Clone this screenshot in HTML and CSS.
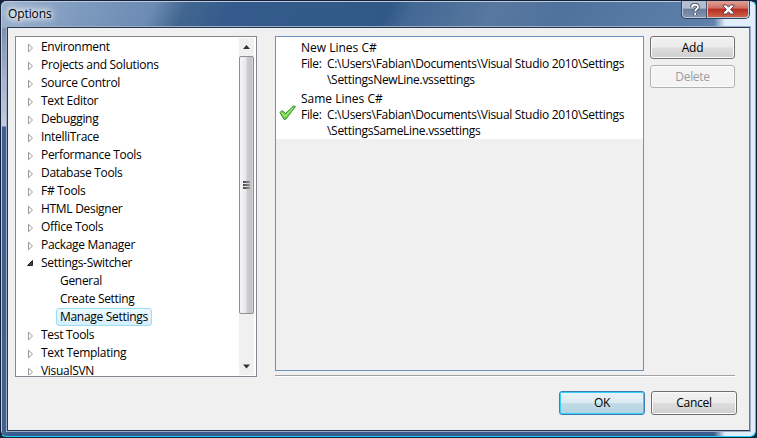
FILE: index.html
```html
<!DOCTYPE html>
<html lang="en">
<head>
<meta charset="utf-8">
<title>Options</title>
<link rel="stylesheet" href="styles.css">
</head>
<body>
<div class="window">
  <header class="titlebar">
    <h1 class="title">Options</h1>
    <div class="caption">
      <button class="help" aria-label="Help"><svg width="12" height="13" viewBox="0 0 12 13"><path d="M3 4.2C3 .9 9 .9 9 4C9 6 6.2 6 6.2 8.2M6.2 10v2" fill="none" stroke="#3c4656" stroke-width="3.6"/><path d="M3 4.2C3 .9 9 .9 9 4C9 6 6.2 6 6.2 8.2M6.2 10v2" fill="none" stroke="#fff" stroke-width="1.9"/></svg></button>
      <button class="close" aria-label="Close"><svg width="13" height="11" viewBox="0 0 13 11"><path d="M1 1h3.500l2 2.200L8.500 1H12v1L8.600 5.500 12 9v1H8.500l-2-2.200L4.500 10H1V9l3.400-3.500L1 2z" fill="#fff" stroke="#58485a" stroke-width="1"/></svg></button>
    </div>
  </header>
  <main class="client">
    <section class="tree">
      <ul class="nodes">
        <li class="node"><svg class="arrow" viewBox="0 0 8 10"><path d="M1.500 1.200v7.600L5.500 5z"/></svg><span>Environment</span></li>
        <li class="node"><svg class="arrow" viewBox="0 0 8 10"><path d="M1.500 1.200v7.600L5.500 5z"/></svg><span>Projects and Solutions</span></li>
        <li class="node"><svg class="arrow" viewBox="0 0 8 10"><path d="M1.500 1.200v7.600L5.500 5z"/></svg><span>Source Control</span></li>
        <li class="node"><svg class="arrow" viewBox="0 0 8 10"><path d="M1.500 1.200v7.600L5.500 5z"/></svg><span>Text Editor</span></li>
        <li class="node"><svg class="arrow" viewBox="0 0 8 10"><path d="M1.500 1.200v7.600L5.500 5z"/></svg><span>Debugging</span></li>
        <li class="node"><svg class="arrow" viewBox="0 0 8 10"><path d="M1.500 1.200v7.600L5.500 5z"/></svg><span>IntelliTrace</span></li>
        <li class="node"><svg class="arrow" viewBox="0 0 8 10"><path d="M1.500 1.200v7.600L5.500 5z"/></svg><span>Performance Tools</span></li>
        <li class="node"><svg class="arrow" viewBox="0 0 8 10"><path d="M1.500 1.200v7.600L5.500 5z"/></svg><span>Database Tools</span></li>
        <li class="node"><svg class="arrow" viewBox="0 0 8 10"><path d="M1.500 1.200v7.600L5.500 5z"/></svg><span>F# Tools</span></li>
        <li class="node"><svg class="arrow" viewBox="0 0 8 10"><path d="M1.500 1.200v7.600L5.500 5z"/></svg><span>HTML Designer</span></li>
        <li class="node"><svg class="arrow" viewBox="0 0 8 10"><path d="M1.500 1.200v7.600L5.500 5z"/></svg><span>Office Tools</span></li>
        <li class="node"><svg class="arrow" viewBox="0 0 8 10"><path d="M1.500 1.200v7.600L5.500 5z"/></svg><span>Package Manager</span></li>
        <li class="node"><svg class="arrow open" viewBox="0 0 8 10"><path d="M5.500 2.500v5h-5z"/></svg><span>Settings-Switcher</span></li>
        <li class="node child"><span>General</span></li>
        <li class="node child"><span>Create Setting</span></li>
        <li class="node child"><span class="selected">Manage Settings</span></li>
        <li class="node"><svg class="arrow" viewBox="0 0 8 10"><path d="M1.500 1.200v7.600L5.500 5z"/></svg><span>Test Tools</span></li>
        <li class="node"><svg class="arrow" viewBox="0 0 8 10"><path d="M1.500 1.200v7.600L5.500 5z"/></svg><span>Text Templating</span></li>
        <li class="node"><svg class="arrow" viewBox="0 0 8 10"><path d="M1.500 1.200v7.600L5.500 5z"/></svg><span>VisualSVN</span></li>
      </ul>
      <div class="scrollbar">
        <svg class="step" viewBox="0 0 15 18"><path d="M4 11l3.500-4 3.500 4z"/></svg>
        <div class="thumb"><i></i><i></i><i></i></div>
        <svg class="step down" viewBox="0 0 15 18"><path d="M4 7.500h7l-3.500 4z"/></svg>
      </div>
    </section>
    <section class="page">
      <div class="list">
        <article class="setting">
          <div class="mark"></div>
          <h2 class="name">New Lines C#</h2>
          <span class="label">File:</span>
          <p class="path">C:\Users\Fabian\Documents\Visual Studio 2010\Settings<br>\SettingsNewLine.vssettings</p>
        </article>
        <article class="setting">
          <div class="mark"><svg width="18" height="16" viewBox="0 0 18 16"><path d="M1 7.500L3 5.500 6.500 8.500 14.500 1 16.500 1.500 7 14 5 14.500z" fill="#72d544" stroke="#3b8c3e" stroke-width="1"/><path d="M3 7.500L6 11.500 14 3" fill="none" stroke="#b6f58b" stroke-width="1"/></svg></div>
          <h2 class="name">Same Lines C#</h2>
          <span class="label">File:</span>
          <p class="path">C:\Users\Fabian\Documents\Visual Studio 2010\Settings<br>\SettingsSameLine.vssettings</p>
        </article>
      </div>
      <div class="actions">
        <button class="btn">Add</button>
        <button class="btn disabled" disabled>Delete</button>
      </div>
    </section>
    <footer class="footer">
      <button class="btn primary">OK</button>
      <button class="btn">Cancel</button>
    </footer>
  </main>
</div>
</body>
</html>
```
FILE: styles.css
```css
* { box-sizing: border-box; }
body {
  margin: 0;
  background: #182238;
  font: 12px/18px "Open Sans", "Noto Sans", sans-serif;
  letter-spacing: -0.3px;
  color: #000;
  overflow: hidden;
}
h1, h2, p, ul { margin: 0; padding: 0; font: inherit; }
button { font: inherit; letter-spacing: inherit; padding: 0; margin: 0; }
.window {
  width: 756px;
  height: 437px;
  padding: 0 5px 5px 5px;
  border: 1px solid #17213a;
  border-right-color: #1ccdf5;
  border-bottom-color: #1ccdf5;
  border-radius: 6px;
  background:
    linear-gradient(90deg, transparent 713px, #e0edfb 724px) 0 0 / 100% 100% no-repeat,
    linear-gradient(180deg, #7e90b0 0, #a3b2ca 50px, #c3cddc 98px, #3f6092 99px, #3f6292 100%) 0 27px / 7px 100% no-repeat,
    linear-gradient(115deg, #9db3cf 0, #7f9bbf 70px, #6c8bb3 140px, #41668f 170px, #345b8b 210px, #315988 355px, #436894 375px, #57789f 450px, #4f729d 510px, #5b7fa9 640px, #6f8cb2 700px) 0 0 / 100% 27px no-repeat,
    #3a5d8f;
  box-shadow: inset 1px 1px #b9cadc;
}
.titlebar { display: flex; justify-content: space-between; height: 26px; padding: 0 0 0 2px; }
.title {
  height: 20px;
  margin-top: 3px;
  line-height: 20px;
  letter-spacing: -0.1px;
  text-shadow: 0 0 4px #fff, 0 0 7px #fff, 0 0 10px #fff, 0 0 12px #dce8f5;
}
.caption { display: flex; height: 18px; border: 1px solid #35435d; border-top: 0; border-radius: 0 0 5px 5px; overflow: hidden; }
.caption button { display: flex; align-items: center; justify-content: center; border: 1px solid #bdc7d7; border-top: 0; }
.help { width: 25px; background: linear-gradient(#b2bfd1 0 45%, #697d9d 50%, #8195b1); border-radius: 0 0 0 4px; }
.close { width: 42px; background: linear-gradient(#dfa299, #cf6d60 45%, #b52d20 50%, #cf6046); border-radius: 0 0 4px 0; box-shadow: -1px 0 #49526a; }
.client {
  display: grid;
  grid-template-columns: 242px 1fr;
  grid-template-rows: 341px 1fr;
  column-gap: 18px;
  height: 404px;
  margin-left: 1px;
  padding: 8px 7px 0;
  border: 1px solid #26364f;
  border-right-color: #6b7583;
  background: #f0f0f0;
  box-shadow: 0 0 0 1px #9eb0c8;
}
.tree { display: flex; border: 1px solid #828790; background: #fff; padding: 1px 2px 1px 0; overflow: hidden; }
.nodes { flex: 1; list-style: none; overflow: hidden; height: 337px; }
.node { display: flex; align-items: center; height: 18px; padding-left: 11px; white-space: nowrap; }
.arrow { width: 8px; height: 10px; margin: 2px 6px 0 0; fill: #fff; stroke: #989898; stroke-width: 1; }
.arrow.open { fill: #404040; stroke: #262626; margin-top: 0; }
.child { padding-left: 40px; }
.child span { padding: 0 4px; line-height: 16px; }
.selected { border: 1px solid #99def5; border-radius: 3px; background: linear-gradient(#edf9fe, #d5effb); }
.node .selected { padding: 0 3px; }
.scrollbar { display: flex; flex-direction: column; width: 15px; background: #f0f0f0; }
.step { width: 15px; height: 18px; fill: #333; }
.step.down { margin-top: auto; }
.thumb {
  display: flex; flex-direction: column; align-items: center; justify-content: center; gap: 1px;
  height: 258px; border: 1px solid #8e8f91; border-radius: 2px;
  background: linear-gradient(90deg, #f6f6f6, #e8e8ea 45%, #cdcdd1 55%, #c4c4c9 90%, #dfdfe2);
}
.thumb i { width: 7px; height: 2px; background: linear-gradient(90deg, #444, #999); }
.page { display: flex; gap: 6px; width: 460px; height: 340px; border-bottom: 1px solid #a0a0a0; box-shadow: 0 1px #fff; }
.list { width: 369px; height: 335px; flex: none; border: 1px solid #6b92b8; }
.setting { display: grid; grid-template: 16px 32px / 25px 26px 1fr; height: 51px; padding-top: 3px; line-height: 16px; background: #fff; white-space: nowrap; }
.mark { grid-row: 1 / 3; padding: 14px 0 0 3px; }
.name { grid-column: 2 / 4; letter-spacing: 0; }
.label { grid-column: 2; }
.actions { display: flex; flex: none; flex-direction: column; gap: 6px; width: 85px; }
.btn {
  width: 86px; height: 23px; border: 1px solid #707070; border-radius: 3px; line-height: 20px;
  background: linear-gradient(#f2f2f2, #ebebeb 48%, #dddddd 52%, #cfcfcf);
  box-shadow: inset 0 0 0 1px #fbfbfb; color: #000;
}
.actions .btn { width: 85px; }
.disabled { border-color: #adb2b5; background: #f4f4f4; color: #9d9d9d; }
.footer { grid-column: 1 / 3; display: flex; justify-content: flex-end; gap: 6px; padding: 14px 5px 0 0; }
.footer .btn { height: 24px; }
.primary { border-color: #3c7fb1; box-shadow: inset 0 0 0 1px #38d0f8; background: linear-gradient(#e9f3f8, #dcebf2 48%, #c1dbe7 52%, #b5d3e2); }
```
